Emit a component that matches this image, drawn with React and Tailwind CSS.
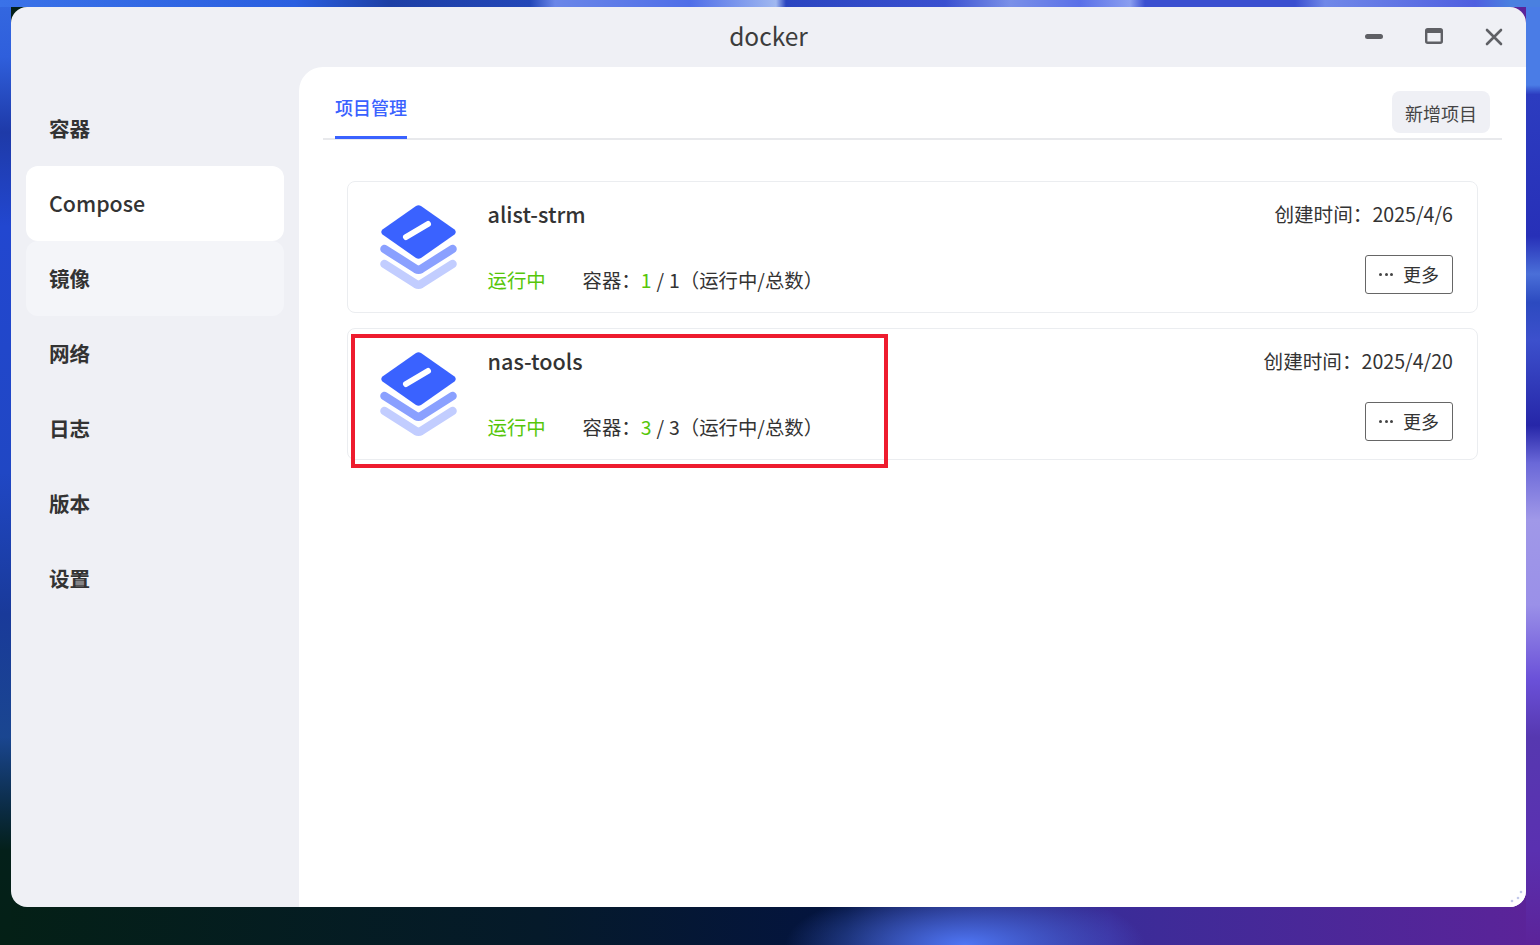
import React from "react";

const navItems = ["容器", "Compose", "镜像", "网络", "日志", "版本", "设置"];

const projects = [
  { name: "alist-strm", running: 1, total: 1, created: "2025/4/6" },
  { name: "nas-tools", running: 3, total: 3, created: "2025/4/20" },
];

const StackIcon = () => (
  <svg width="77" height="86" viewBox="0 0 77 86" className="shrink-0">
    <path
      d="M4.5 59 L36 79 Q38.5 80.5 41 79 L72.5 59"
      fill="none"
      stroke="#c2cdff"
      strokeWidth="8.5"
      strokeLinecap="round"
      strokeLinejoin="round"
    />
    <path
      d="M4.5 44 L36 64 Q38.5 65.5 41 64 L72.5 44"
      fill="none"
      stroke="#8aa0ff"
      strokeWidth="8.5"
      strokeLinecap="round"
      strokeLinejoin="round"
    />
    <path
      d="M36 1 Q38.5 -0.5 41 1 L74.5 24.5 Q77 27 74.5 29.5 L41 53 Q38.5 54.5 36 53 L2.5 29.5 Q0 27 2.5 24.5 Z"
      fill="#3a62ff"
    />
    <path d="M26 32 L48 19" stroke="#ffffff" strokeWidth="6" strokeLinecap="round" />
  </svg>
);

const ProjectCard = ({ project }) => (
  <div className="flex h-[132px] rounded-lg border border-[#ebedf0] bg-white pl-[32px] pr-[24px] text-[#333]">
    <div className="pt-[23px]">
      <StackIcon />
    </div>
    <div className="ml-[30.5px] flex flex-1 flex-col justify-between pt-[15px] pb-[18px]">
      <div className="text-[21.6px] leading-[34px] font-medium">{project.name}</div>
      <div className="flex text-[19.4px] leading-[28px]">
        <span className="w-[95px] text-[#56c60a]">运行中</span>
        <span>容器：</span>
        <span className="text-[#56c60a]">{project.running}</span>
        <span className="mx-[5px]">/</span>
        <span>{project.total}</span>
        <span>（运行中/总数）</span>
      </div>
    </div>
    <div className="flex flex-col items-end justify-between pt-[17px] pb-[18px]">
      <div className="text-[19.6px] leading-[30px]">创建时间：{project.created}</div>
      <button className="flex h-[39px] w-[88px] items-center gap-[10px] rounded-[3px] border border-[#666] pl-[13px] text-[18px]">
        <span className="flex gap-[2.5px]">
          <i className="size-[3px] rounded-full bg-[#444]" />
          <i className="size-[3px] rounded-full bg-[#444]" />
          <i className="size-[3px] rounded-full bg-[#444]" />
        </span>
        更多
      </button>
    </div>
  </div>
);

const App = () => {
  return (
    <div
      className="relative h-[945px] w-[1540px] overflow-hidden bg-[linear-gradient(90deg,#3a72e8_0px,#2a5fe0_295px,#1d3fa5_390px,#2347b8_530px,#6a86e8_555px,#4f6ee8_690px,#a0b8f0_776px,#2a45c0_786px,#3a50d0_945px,#7a90e8_1010px,#5a70e8_1080px,#8a9ef0_1130px,#3a4fd0_1145px,#3a4fd0_1295px,#7088e8_1325px,#4f5fe0_1475px,#4a80e0_1510px),linear-gradient(180deg,#3468e0_0%,#2f5fdc_6%,#1e3aa8_14%,#2247d0_24%,#2047c4_50%,#193a9a_65%,#1a4690_78%,#0a2a40_86%,#04201a_90%,#042016_100%),linear-gradient(180deg,#4a7ce6_0%,#4a7ce6_9%,#2c3cc0_10%,#2730b8_25%,#4a6fd8_29%,#2c4ac0_32%,#3c50cc_36%,#2626a8_45%,#6a68d8_49%,#a098e8_55%,#9a90e8_64%,#6a50d8_72%,#5638b0_78%,#5a30b0_90%,#5c2399_100%),radial-gradient(ellipse_180px_60px_at_965px_945px,#4f76f5_0%,transparent_100%),linear-gradient(90deg,#042016_0%,#051a2a_35%,#041440_55%,#3a2c98_72%,#5c2399_100%)] bg-no-repeat [background-size:1540px_7px,11px_945px,14px_945px,auto,auto] [background-position:0_0,0_0,100%_0,0_0,0_0] pt-[7px] pl-[11px]"
      style={{ fontFamily: '"Noto Sans CJK SC", "Noto Sans", sans-serif' }}
    >
      <div className="relative flex h-[900px] w-[1515px] flex-col overflow-hidden rounded-[16px] bg-[#eff0f5]">
        <div className="relative flex h-[60px] shrink-0 items-center justify-center pb-[2px] text-[24.5px] text-[#3c3c3c]">
          docker
          <svg width="18" height="6" viewBox="0 0 18 6" className="absolute top-[27px] left-[1354px]">
            <rect x="0" y="0" width="18" height="5" rx="2.5" fill="#5f6065" />
          </svg>
          <svg width="18" height="16" viewBox="0 0 18 16" className="absolute top-[21px] left-[1414px]">
            <rect x="1.2" y="1.2" width="15.6" height="13.6" rx="1.5" fill="none" stroke="#5f6065" strokeWidth="2.4" />
            <rect x="1" y="1" width="16" height="4" fill="#5f6065" />
          </svg>
          <svg width="18" height="18" viewBox="0 0 18 18" className="absolute top-[21px] left-[1474px]">
            <path d="M2 2 L16 16 M16 2 L2 16" stroke="#5f6065" strokeWidth="2.6" strokeLinecap="round" />
          </svg>
        </div>
        <div className="flex min-h-0 flex-1">
          <nav className="w-[288px] shrink-0 pt-[24px] pl-[15px]">
            {navItems.map((item) => (
              <div
                key={item}
                className={
                  item === "Compose"
                    ? "flex h-[75px] w-[258px] items-center rounded-[12px] bg-white pl-[23px] text-[21.4px] font-medium text-[#333]"
                    : item === "镜像"
                      ? "flex h-[75px] w-[258px] items-center rounded-[12px] bg-[#f4f5f9] pl-[23px] text-[20.6px] font-semibold text-[#333]"
                      : "flex h-[75px] w-[258px] items-center pl-[23px] text-[20.6px] font-semibold text-[#333]"
                }
              >
                {item}
              </div>
            ))}
          </nav>
          <main className="relative flex-1 rounded-tl-[24px] bg-white px-[24px]">
            <div className="flex h-[73px] items-start justify-between border-b-2 border-[#e8e9ec] px-[12px]">
              <div className="flex h-[72px] items-center border-b-[3px] border-[#3a62ff] pt-[22px] pb-[10px] text-[18px] font-medium text-[#3a62ff]">
                项目管理
              </div>
              <button className="mt-[24px] h-[42px] w-[98px] rounded-[8px] bg-[#eff0f5] pt-[2px] text-[18px] text-[#444]">
                新增项目
              </button>
            </div>
            <div className="flex flex-col gap-[15px] px-[24px] pt-[41px]">
              {projects.map((p) => (
                <ProjectCard key={p.name} project={p} />
              ))}
            </div>
            <svg width="14" height="14" viewBox="0 0 14 14" className="absolute right-[3px] bottom-[3px]">
              <circle cx="12" cy="2" r="1.3" fill="#c3c9ea" />
              <circle cx="9" cy="8" r="1.3" fill="#c3c9ea" />
              <circle cx="3" cy="11" r="1.3" fill="#c3c9ea" />
            </svg>
          </main>
        </div>
      </div>
      <div className="absolute top-[334px] left-[351px] h-[134px] w-[537px] border-4 border-[#ee1c2e]" />
    </div>
  );
};

export default App;
